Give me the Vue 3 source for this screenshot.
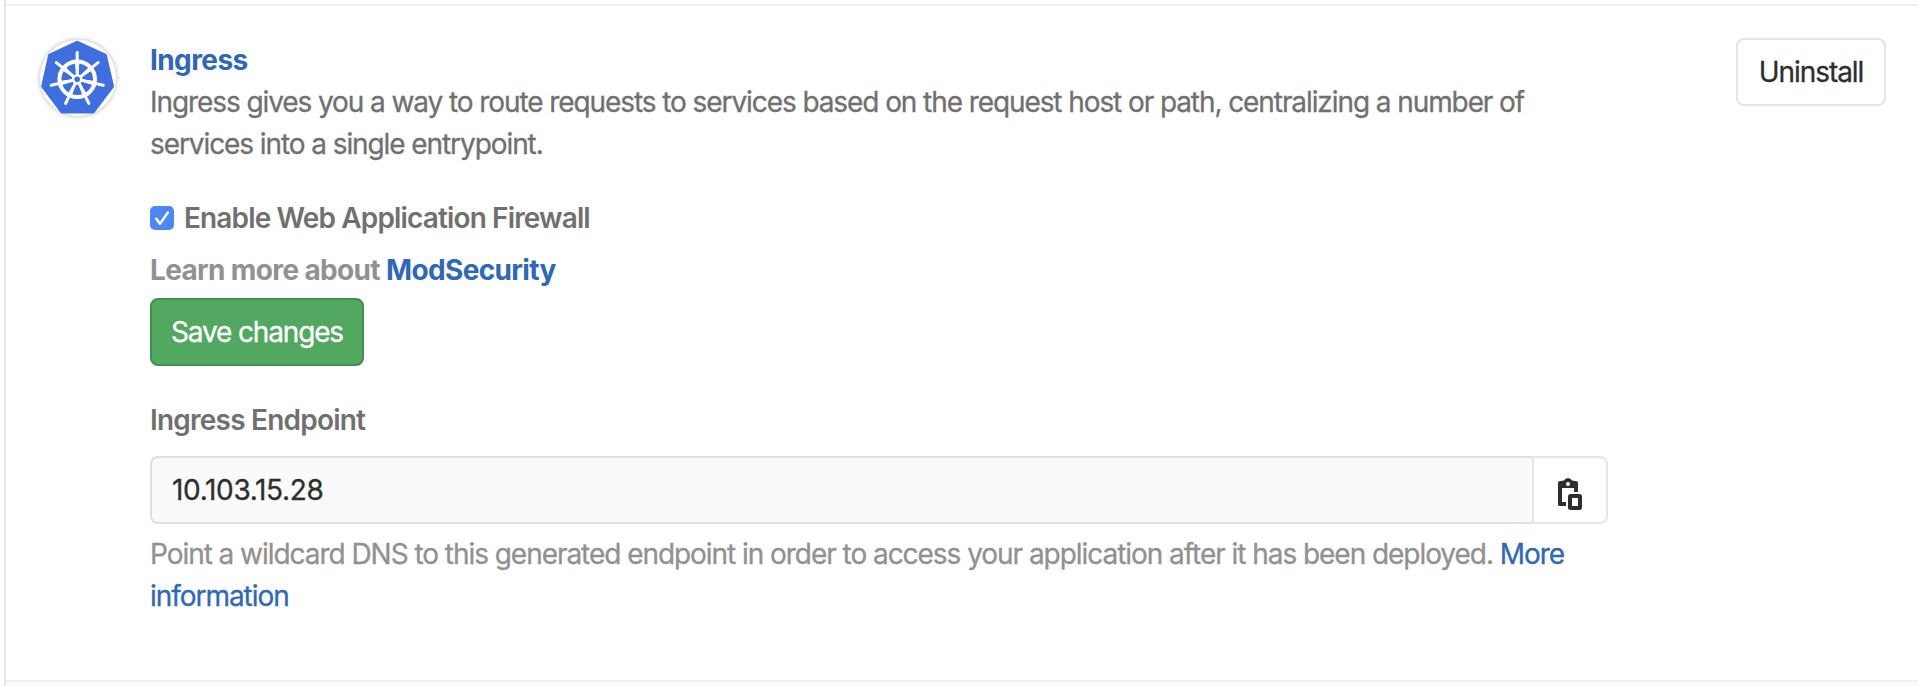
<script setup>
import { ref } from 'vue'

const firewall = ref(true)
const endpoint = ref('10.103.15.28')
const spokes = Array.from({ length: 7 }, (_, i) => (i * 360) / 7)
</script>

<template>
  <main class="page">
    <section class="app-row">
      <div class="avatar">
        <svg viewBox="0 0 80 80" width="80" height="80" aria-hidden="true">
          <path
            d="M39.2 4.8 L67 17.6 L74 48.2 L55 73.4 H24 L5.2 48.2 L12 17.6 Z"
            fill="#3f6fde"
            stroke="#3f6fde"
            stroke-width="4"
            stroke-linejoin="round"
          />
          <g stroke="#fff" fill="none" stroke-linecap="round">
            <circle cx="39.2" cy="41.3" r="17.8" stroke-width="4" />
            <g v-for="a in spokes" :key="a" :transform="`rotate(${a} 39.2 41.3)`">
              <path d="M39.2 36.6 V14.6" stroke-width="3" />
              <path d="M37.4 23.5 L38.6 36 H39.8 L41 23.5 Z" fill="#fff" stroke-width="1" />
            </g>
          </g>
          <circle cx="39.2" cy="41.3" r="5.4" fill="#fff" />
          <circle cx="39.2" cy="41.3" r="2.8" fill="#3f6fde" />
        </svg>
      </div>

      <div class="content">
        <a class="link title">Ingress</a>
        <p class="desc">
          Ingress gives you a way to route requests to services based on the request host or path,
          centralizing a number of<br />services into a single entrypoint.
        </p>

        <label class="check">
          <input v-model="firewall" type="checkbox" />
          <span class="box">
            <svg v-if="firewall" viewBox="0 0 24 24" width="24" height="24">
              <path d="M6.2 12.8 L10 17.6 L17.8 6.6" fill="none" stroke="#fff" stroke-width="2.5" stroke-linecap="round" stroke-linejoin="round" />
            </svg>
          </span>
          <span class="check-text">Enable Web Application Firewall</span>
        </label>
        <p class="learn"><span class="learn-text">Learn more about </span><a class="link">ModSecurity</a></p>
        <button class="btn save" type="button"><span>Save changes</span></button>

        <p class="label">Ingress Endpoint</p>
        <div class="group">
          <input v-model="endpoint" class="field" type="text" readonly />
          <button class="copy" type="button" aria-label="Copy">
            <svg viewBox="0 0 24 32" width="24" height="32">
              <path
                d="M0 4.6 Q0 3.4 1.2 3.2 L6 2.6 Q7.2 0 10 0 Q12.8 0 14 2.6 L18.8 3.2 Q20 3.4 20 4.6 V14 H16 V10 H4 V24 H8 V28 H1.6 Q0 28 0 26.4 Z"
                fill="#2e2e2e"
              />
              <circle cx="10" cy="6" r="2" fill="#fff" />
              <rect x="12" y="18" width="10" height="12" rx=".6" fill="#fff" stroke="#2e2e2e" stroke-width="4" />
            </svg>
          </button>
        </div>
        <p class="help"><span class="help-text">Point a wildcard DNS to this generated endpoint in order to access your application after it has been deployed. </span><a class="link">More<br />information</a></p>
      </div>

      <button class="btn uninstall" type="button"><span>Uninstall</span></button>
    </section>
  </main>
</template>

<style>
body {
  margin: 0;
  background: #fff;
  overflow: hidden;
}
</style>

<style scoped>
.page {
  box-sizing: border-box;
  height: 686px;
  margin-left: 4px;
  padding-top: 4px;
  border-left: 2px solid #e5e5e5;
  background: linear-gradient(#fff 680px, #fafafa 680px);
  font: 400 28px/42px Inter, "Liberation Sans", sans-serif;
  letter-spacing: -0.78px;
  color: #707070;
}
.app-row {
  box-sizing: border-box;
  height: 678px;
  display: flex;
  align-items: flex-start;
  padding: 32px 32px 0;
  border-top: 2px solid #f0f0f0;
  border-bottom: 2px solid #f0f0f0;
}
.avatar {
  width: 80px;
  height: 80px;
  flex: none;
  border-radius: 50%;
  box-shadow: inset 0 0 0 2px #e5e5e5, 0 0 0 2px #f6f6f6;
}
.avatar svg {
  display: block;
}
.content {
  width: 1458px;
  flex: none;
  margin-left: 32px;
  padding-top: 1px;
}
p {
  margin: 0;
  white-space: nowrap;
}
.link {
  color: #2f68b4;
}
.title {
  display: block;
  font-weight: 700;
  letter-spacing: -0.6px;
}
.desc,
.help,
.btn,
.field {
  -webkit-text-stroke: 0.3px currentColor;
}
.desc {
  letter-spacing: -1.085px;
}
.check {
  display: flex;
  align-items: center;
  gap: 10px;
  margin-top: 32px;
  font-weight: 600;
  letter-spacing: -0.86px;
}
.check input {
  position: absolute;
  opacity: 0;
}
.box {
  width: 24px;
  height: 24px;
  border-radius: 5px;
  background: #4b88f5;
}
.box svg {
  display: block;
}
.learn {
  margin-top: 10px;
  font-weight: 700;
  letter-spacing: -0.64px;
  color: #919191;
}
.btn,
.copy {
  box-sizing: border-box;
  height: 68px;
  padding: 0;
  font: inherit;
  letter-spacing: -1.15px;
  border: 2px solid #e5e5e5;
  border-radius: 8px;
  background: #fff;
  color: #2e2e2e;
}
.save {
  display: block;
  width: 214px;
  margin-top: 7px;
  border-color: #3f9150;
  background: #52a860;
  color: #fff;
}
.label {
  margin-top: 33px;
  font-weight: 600;
}
.group {
  display: flex;
  margin-top: 15px;
}
.field {
  box-sizing: border-box;
  width: 1384px;
  height: 68px;
  padding: 0 20px;
  border: 2px solid #dfdfdf;
  border-right-color: #e5e5e5;
  border-radius: 8px 0 0 8px;
  background: #fafafa;
  font: inherit;
  letter-spacing: -0.33px;
  color: #2e2e2e;
  outline: none;
}
.copy {
  width: 74px;
  border-left: 0;
  border-radius: 0 8px 8px 0;
}
.copy svg {
  display: block;
  margin: 8px 0 0 24px;
}
.help {
  margin-top: 9px;
  letter-spacing: -1.045px;
  color: #919191;
}
.uninstall {
  width: 150px;
  margin-left: auto;
  letter-spacing: -1.05px;
}
</style>
